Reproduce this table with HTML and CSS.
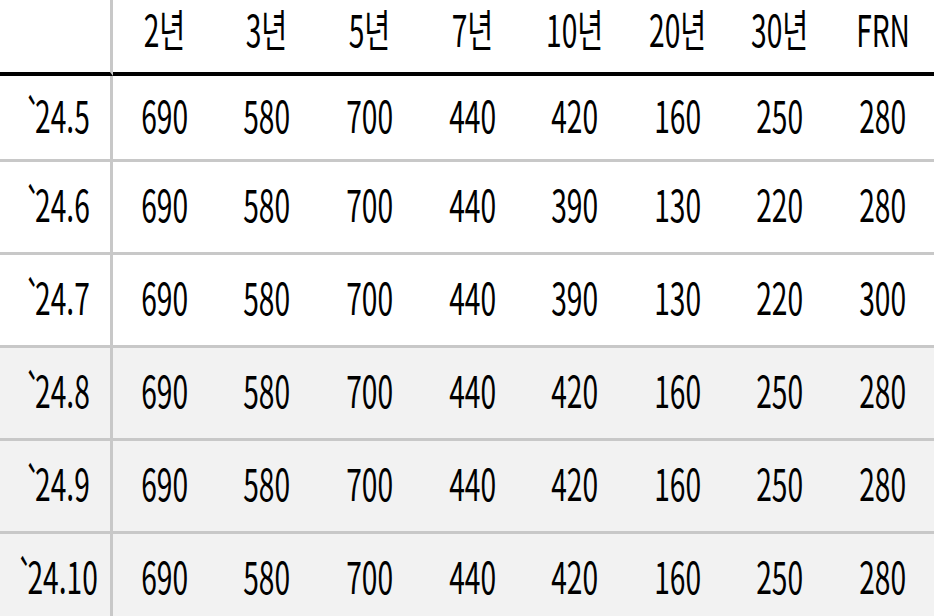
FILE: index.html
```html
<!DOCTYPE html>
<html lang="ko">
<head>
<meta charset="utf-8">
<link rel="stylesheet" href="styles.css">
</head>
<body>
<table class="rates">
  <thead>
    <tr>
      <th class="label"></th>
      <th><span class="t">2년</span></th>
      <th><span class="t">3년</span></th>
      <th><span class="t">5년</span></th>
      <th><span class="t">7년</span></th>
      <th><span class="t">10년</span></th>
      <th><span class="t">20년</span></th>
      <th><span class="t">30년</span></th>
      <th><span class="t">FRN</span></th>
    </tr>
  </thead>
  <tbody>
    <tr class="first">
      <td class="label"><span class="t"><span class="tick">`</span>24.5</span></td>
      <td><span class="t">690</span></td><td><span class="t">580</span></td><td><span class="t">700</span></td><td><span class="t">440</span></td>
      <td><span class="t">420</span></td><td><span class="t">160</span></td><td><span class="t">250</span></td><td><span class="t">280</span></td>
    </tr>
    <tr>
      <td class="label"><span class="t"><span class="tick">`</span>24.6</span></td>
      <td><span class="t">690</span></td><td><span class="t">580</span></td><td><span class="t">700</span></td><td><span class="t">440</span></td>
      <td><span class="t">390</span></td><td><span class="t">130</span></td><td><span class="t">220</span></td><td><span class="t">280</span></td>
    </tr>
    <tr>
      <td class="label"><span class="t"><span class="tick">`</span>24.7</span></td>
      <td><span class="t">690</span></td><td><span class="t">580</span></td><td><span class="t">700</span></td><td><span class="t">440</span></td>
      <td><span class="t">390</span></td><td><span class="t">130</span></td><td><span class="t">220</span></td><td><span class="t">300</span></td>
    </tr>
    <tr class="shade">
      <td class="label"><span class="t"><span class="tick">`</span>24.8</span></td>
      <td><span class="t">690</span></td><td><span class="t">580</span></td><td><span class="t">700</span></td><td><span class="t">440</span></td>
      <td><span class="t">420</span></td><td><span class="t">160</span></td><td><span class="t">250</span></td><td><span class="t">280</span></td>
    </tr>
    <tr class="shade">
      <td class="label"><span class="t"><span class="tick">`</span>24.9</span></td>
      <td><span class="t">690</span></td><td><span class="t">580</span></td><td><span class="t">700</span></td><td><span class="t">440</span></td>
      <td><span class="t">420</span></td><td><span class="t">160</span></td><td><span class="t">250</span></td><td><span class="t">280</span></td>
    </tr>
    <tr class="shade">
      <td class="label"><span class="t"><span class="tick">`</span>24.10</span></td>
      <td><span class="t">690</span></td><td><span class="t">580</span></td><td><span class="t">700</span></td><td><span class="t">440</span></td>
      <td><span class="t">420</span></td><td><span class="t">160</span></td><td><span class="t">250</span></td><td><span class="t">280</span></td>
    </tr>
  </tbody>
</table>
</body>
</html>
```

FILE: styles.css
```css
html, body {
  margin: 0;
  padding: 0;
  background: #ffffff;
}
body {
  width: 934px;
  height: 616px;
  overflow: hidden;
  font-family: "Noto Sans CJK KR", "Noto Sans", sans-serif;
  color: #000000;
}
.rates {
  border-collapse: separate;
  border-spacing: 0;
  width: 934px;
  table-layout: fixed;
}
.rates th,
.rates td {
  box-sizing: border-box;
  padding: 0;
  text-align: center;
  vertical-align: middle;
  font-weight: 400;
  font-size: 44px;
  line-height: 1;
  white-space: nowrap;
  overflow: visible;
}
.rates .label {
  width: 113px;
  border-right: 3px solid #c8c8c8;
}
.rates th {
  height: 76px;
  padding-bottom: 17px;
  border-bottom: 4px solid #000000;
}
.rates td {
  height: 93px;
  padding-bottom: 9px;
  border-top: 3px solid #c8c8c8;
}
.rates tr.first td {
  height: 83px;
  padding-bottom: 7px;
  border-top: 0;
}
.rates tr.shade td {
  background: #f2f2f2;
}
.rates td.label {
  padding-left: 5px;
}
.t {
  display: inline-block;
  margin: 0 -30px;
  transform: scaleX(0.64);
  transform-origin: 50% 50%;
}
.tick {
  margin-right: -10px;
}
```
